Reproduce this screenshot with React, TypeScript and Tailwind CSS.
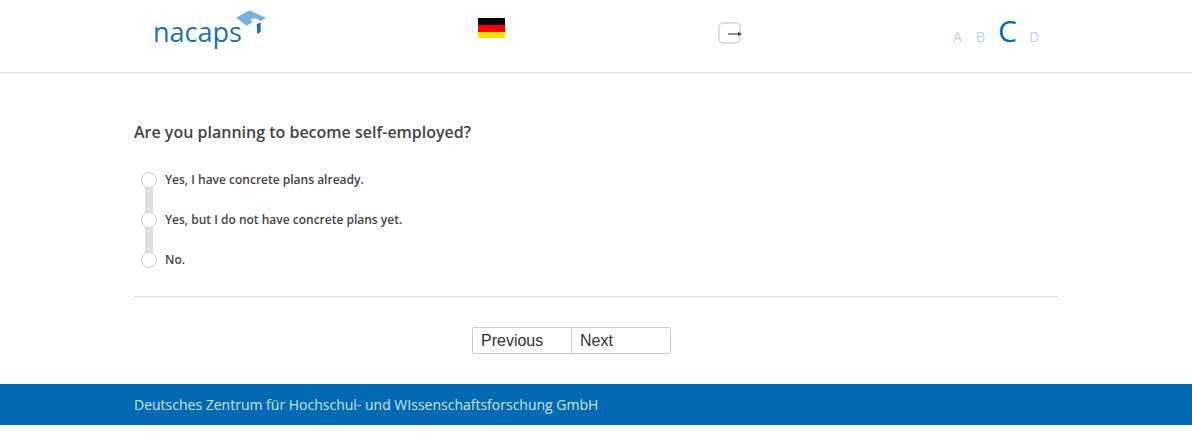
import { useState } from 'react';

const options = [
  'Yes, I have concrete plans already.',
  'Yes, but I do not have concrete plans yet.',
  'No.',
];

function Logo() {
  return (
    <div className="relative w-[112px] h-[40px] ml-[153px]">
      <span className="absolute left-0 top-[15px] text-[27px] leading-[34px] text-[#1a72b2] font-['Open_Sans',sans-serif]">nacaps</span>
      <svg className="absolute left-[82px] top-[10px]" width="32" height="26" viewBox="0 0 32 26">
        <path d="M1 7.7 L14.3 .3 L31 7.7 L26 11 L20.5 8.3 L15.7 9 L17.7 12.3 L11.7 15.7 Z" fill="#7db0d8" />
        <path d="M21.7 14.3 L25.7 12.3 L25.7 21.7 L22.3 24.3 Z" fill="#1a72b2" />
      </svg>
    </div>
  );
}

export default function App() {
  const [selected, setSelected] = useState<number | null>(null);

  return (
    <div className="w-full h-[434px] bg-white font-['Open_Sans',sans-serif] text-[#444444]">
      {/* Header */}
      <header className="relative h-[73px] border-b border-[#dddddd]">
        <div className="absolute left-0 top-0"><Logo /></div>
        <div className="absolute left-[478px] top-[18px] w-[27px] h-[20px] flex flex-col">
          <div className="h-[7px] bg-black" />
          <div className="h-[7px] bg-[#ff0000]" />
          <div className="h-[6px] bg-[#ffe000]" />
        </div>
        <button className="absolute left-[718px] top-[22px] w-[23px] h-[22px] bg-white border-2 border-[#e0e0e0] rounded-[5px]">
          <svg className="absolute left-[7px] top-[7px]" width="16" height="6" viewBox="0 0 16 6">
            <path d="M1 3 H12" stroke="#444444" strokeWidth="1.2" />
            <path d="M11 .8 L15 3 L11 5.2 Z" fill="#444444" />
          </svg>
        </button>
        <div className="absolute left-[953px] top-[15px] flex items-baseline text-[#b6d5ec] text-[14px] leading-[32px]">
          <span className="w-[23px]">A</span>
          <span className="w-[22px]">B</span>
          <span className="w-[31px] text-[30px] text-[#026ab4]">C</span>
          <span>D</span>
        </div>
      </header>

      {/* Question */}
      <main className="mx-[134px] w-[924px]">
        <h1 className="pt-[49px] text-[16px] leading-[20px] font-semibold">Are you planning to become self-employed?</h1>
        <div className="relative mt-[30px] h-[100px] ml-[7px]">
          <div className="absolute left-[4px] top-[10px] w-[8px] h-[80px] bg-[#dedede]" />
          <div className="relative flex flex-col gap-[24px]">
            {options.map((option, index) => (
              <label key={option} className="flex items-center h-[16px] cursor-pointer" onClick={() => setSelected(index)}>
                <span className={`w-[16px] h-[16px] rounded-full border border-[#cccccc] ${selected === index ? 'bg-[#026ab4]' : 'bg-white'}`} />
                <span className="ml-[8px] text-[12px] leading-[16px] font-semibold">{option}</span>
              </label>
            ))}
          </div>
        </div>
        <div className="mt-[24px] border-t border-[#dddddd]" />
        <div className="mt-[30px] ml-[338px] font-['Liberation_Sans',sans-serif] text-[16px] text-[#333333]">
          <div className="flex w-[199px] h-[27px] border border-[#cccccc] rounded-[2px]">
            <button className="w-[99px] text-left pl-[8px] border-r border-[#cccccc]">Previous</button>
            <button className="flex-1 text-left pl-[8px]">Next</button>
          </div>
        </div>
      </main>

      {/* Footer */}
      <footer className="mt-[30px] h-[41px] bg-[#026ab4] pl-[134px] flex items-center text-[14px] text-[#cfe3f3]">
        Deutsches Zentrum für Hochschul- und WIssenschaftsforschung GmbH
      </footer>
    </div>
  );
}
